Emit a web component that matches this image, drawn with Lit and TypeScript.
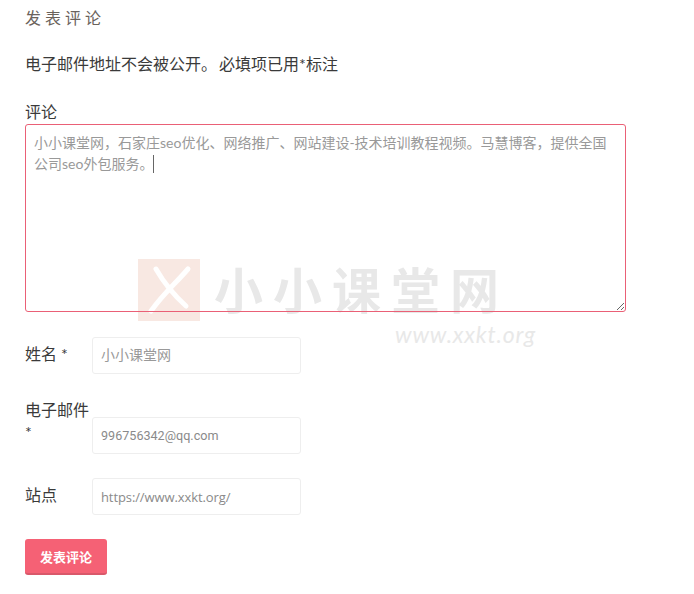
import { LitElement, html, css } from "lit";
import { customElement } from "lit/decorators.js";

@customElement("app-root")
export class AppRoot extends LitElement {
  static styles = css`
    :host {
      display: block;
      position: relative;
      width: 694px;
      height: 594px;
      overflow: hidden;
      background: #fff;
      color: #3a3a3a;
      font-family: "Open Sans", "Noto Sans CJK SC", sans-serif;
    }
    .form {
      position: relative;
      padding: 7px 0 0 25px;
      display: flex;
      flex-direction: column;
      align-items: flex-start;
    }
    .title {
      margin: 0;
      font-size: 16px;
      line-height: 22px;
      font-weight: 400;
      letter-spacing: 4px;
      color: #6a625c;
    }
    .note {
      margin: 24px 0 0;
      font-size: 16px;
      line-height: 22px;
      word-spacing: -2px;
      font-family: Lato, "Noto Sans CJK SC", sans-serif;
    }
    .comment-label {
      margin-top: 26px;
      font-size: 16px;
      line-height: 22px;
      height: 23px;
    }
    .area {
      box-sizing: border-box;
      width: 601px;
      height: 188px;
      border: 1px solid #ea6076;
      border-radius: 3px;
      padding: 7px 8px;
      font-family: Lato, "Noto Sans CJK SC", sans-serif;
      font-size: 14px;
      line-height: 21px;
      color: #999;
      overflow: auto;
      resize: both;
    }
    .caret {
      display: inline-block;
      width: 1px;
      height: 18px;
      background: #666;
      vertical-align: -4px;
    }
    .row {
      display: flex;
      align-items: flex-start;
    }
    .row label {
      width: 67px;
      flex: none;
      font-size: 16px;
      line-height: 22px;
      font-family: Lato, "Noto Sans CJK SC", sans-serif;
    }
    .row input {
      box-sizing: border-box;
      width: 209px;
      height: 37px;
      border: 1px solid #eee;
      border-radius: 3px;
      padding: 0 8px;
      font: inherit;
      font-size: 13px;
      letter-spacing: -0.1px;
      color: #8a8a8a;
      background: transparent;
      outline: none;
    }
    .row input.cjk {
      font-size: 14px;
      letter-spacing: 0;
      padding-bottom: 3px;
      color: #999;
    }
    .row input.mail {
      font-family: Roboto, sans-serif;
      font-size: 12.6px;
      letter-spacing: 0;
    }
    .r1 {
      margin-top: 25px;
    }
    .r1 label {
      padding-top: 6px;
    }
    .r2 {
      margin-top: 25px;
    }
    .r2 input {
      margin-top: 18px;
    }
    .r3 {
      margin-top: 24px;
    }
    .r3 label {
      padding-top: 6px;
    }
    .send {
      margin-top: 24px;
      box-sizing: border-box;
      width: 82px;
      height: 36px;
      border: 0;
      border-bottom: 2px solid #d9586a;
      border-radius: 3px;
      background: #f56175;
      color: #fff;
      font: inherit;
      font-size: 13px;
      font-weight: 700;
    }
    .mark {
      position: absolute;
      left: 138px;
      top: 259px;
      pointer-events: none;
    }
    .logo {
      position: absolute;
      left: 0;
      top: 0;
      display: block;
    }
    .brand {
      position: absolute;
      left: 76px;
      top: 1px;
      white-space: nowrap;
      font-size: 49px;
      line-height: 60px;
      font-weight: 700;
      letter-spacing: 10px;
      color: #e8e8e8;
    }
    .url {
      position: absolute;
      left: 257px;
      top: 60px;
      white-space: nowrap;
      font-family: Lato, sans-serif;
      font-style: italic;
      font-size: 23px;
      line-height: 30px;
      letter-spacing: 0.8px;
      color: #e8e8e8;
    }
  `;

  render() {
    return html`
      <div class="mark">
        <svg class="logo" width="62" height="62" viewBox="0 0 62 62">
          <rect width="62" height="62" fill="#f8e8e2"></rect>
          <path
            d="M18 10 C26 24 38 38 48 47 M50 10 C38 24 26 34 13 52"
            fill="none"
            stroke="#fff"
            stroke-width="5"
            stroke-linecap="round"
          ></path>
        </svg>
        <div class="brand">小小课堂网</div>
        <div class="url">www.xxkt.org</div>
      </div>
      <form class="form">
        <h3 class="title">发表评论</h3>
        <p class="note">电子邮件地址不会被公开。 必填项已用*标注</p>
        <div class="comment-label">评论</div>
        <div class="area">
          小小课堂网，石家庄seo优化、网络推广、网站建设-技术培训教程视频。马慧博客，提供全国公司seo外包服务。<span class="caret"></span>
        </div>
        <div class="row r1">
          <label>姓名 *</label>
          <input class="cjk" value="小小课堂网" />
        </div>
        <div class="row r2">
          <label>电子邮件 *</label>
          <input class="mail" value="996756342@qq.com" />
        </div>
        <div class="row r3">
          <label>站点</label>
          <input value="https://www.xxkt.org/" />
        </div>
        <button class="send" type="button">发表评论</button>
      </form>
    `;
  }
}
